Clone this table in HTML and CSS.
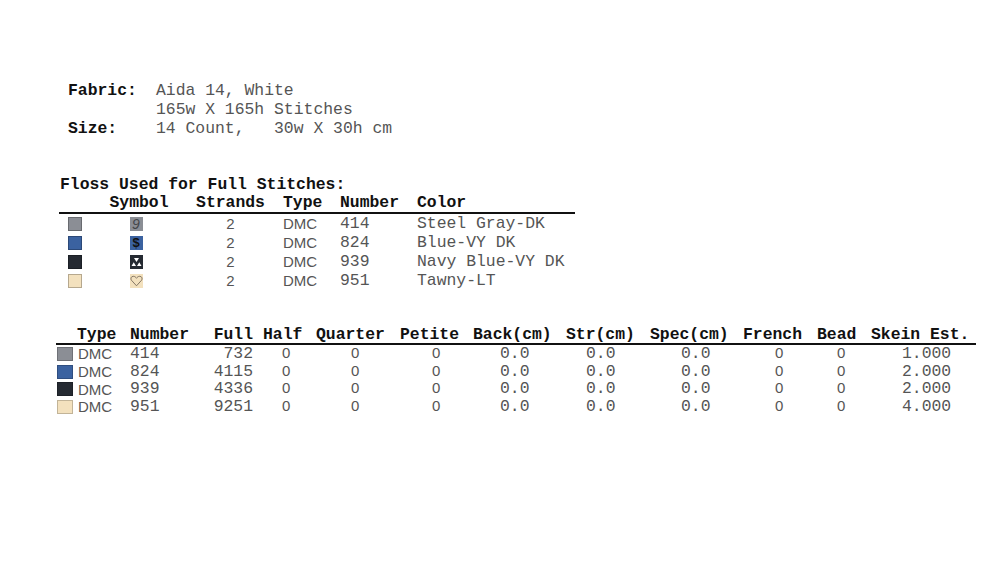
FILE: index.html
```html
<!DOCTYPE html>
<html>
<head>
<meta charset="utf-8">
<link rel="stylesheet" href="styles.css">
</head>
<body>
<div class="page">
  <div class="fabric">
    <div class="lbl">Fabric:</div><div class="val">Aida 14, White</div>
    <div class="lbl"></div><div class="val">165w X 165h Stitches</div>
    <div class="lbl">Size:</div><div class="val">14 Count,&nbsp;&nbsp; 30w X 30h cm</div>
  </div>

  <div class="floss-title">Floss Used for Full Stitches:</div>
  <div class="floss">
    <div class="fh"></div>
    <div class="fh c">Symbol</div>
    <div class="fh c">Strands</div>
    <div class="fh">Type</div>
    <div class="fh">Number</div>
    <div class="fh">Color</div>

    <div class="fd"><span class="sw gray"></span></div>
    <div class="fd c"><span class="sym gray"><span class="nine">9</span></span></div>
    <div class="fd c sans">2</div>
    <div class="fd sans">DMC</div>
    <div class="fd">414</div>
    <div class="fd">Steel Gray-DK</div>

    <div class="fd"><span class="sw blue"></span></div>
    <div class="fd c"><span class="sym blue"><span class="dollar">$</span></span></div>
    <div class="fd c sans">2</div>
    <div class="fd sans">DMC</div>
    <div class="fd">824</div>
    <div class="fd">Blue-VY DK</div>

    <div class="fd"><span class="sw navy"></span></div>
    <div class="fd c"><span class="sym navy"><svg width="13" height="14" viewBox="0 0 13 14"><path d="M4 3 L9 3 L6.5 7 Z M1.5 11 L6 11 L3.75 7.2 Z M7 11 L11.5 11 L9.25 7.2 Z" fill="#fff"/></svg></span></div>
    <div class="fd c sans">2</div>
    <div class="fd sans">DMC</div>
    <div class="fd">939</div>
    <div class="fd">Navy Blue-VY DK</div>

    <div class="fd"><span class="sw tawny"></span></div>
    <div class="fd c"><span class="sym tawny"><svg width="13" height="14" viewBox="0 0 13 14"><path d="M6.5 11.8 L1.4 6.2 C0.4 5 0.8 2.4 3.2 2.3 C4.8 2.2 5.9 3.3 6.5 4.3 C7.1 3.3 8.2 2.2 9.8 2.3 C12.2 2.4 12.6 5 11.6 6.2 Z" fill="none" stroke="#7a6d5c" stroke-width="0.9"/></svg></span></div>
    <div class="fd c sans">2</div>
    <div class="fd sans">DMC</div>
    <div class="fd">951</div>
    <div class="fd">Tawny-LT</div>
  </div>

  <div class="summary">
    <div class="sh type">Type</div>
    <div class="sh">Number</div>
    <div class="sh r">Full</div>
    <div class="sh">Half</div>
    <div class="sh">Quarter</div>
    <div class="sh">Petite</div>
    <div class="sh">Back(cm)</div>
    <div class="sh">Str(cm)</div>
    <div class="sh">Spec(cm)</div>
    <div class="sh">French</div>
    <div class="sh">Bead</div>
    <div class="sh">Skein Est.</div>

    <div class="sd first"><span class="sw2 gray"></span><span class="sans">DMC</span></div>
    <div class="sd">414</div>
    <div class="sd r">732</div>
    <div class="sd p-half"><span class="sans">0</span></div>
    <div class="sd p-quarter"><span class="sans">0</span></div>
    <div class="sd p-petite"><span class="sans">0</span></div>
    <div class="sd p-back">0.0</div>
    <div class="sd p-str">0.0</div>
    <div class="sd p-spec">0.0</div>
    <div class="sd p-french"><span class="sans">0</span></div>
    <div class="sd p-bead"><span class="sans">0</span></div>
    <div class="sd p-skein">1.000</div>

    <div class="sd first"><span class="sw2 blue"></span><span class="sans">DMC</span></div>
    <div class="sd">824</div>
    <div class="sd r">4115</div>
    <div class="sd p-half"><span class="sans">0</span></div>
    <div class="sd p-quarter"><span class="sans">0</span></div>
    <div class="sd p-petite"><span class="sans">0</span></div>
    <div class="sd p-back">0.0</div>
    <div class="sd p-str">0.0</div>
    <div class="sd p-spec">0.0</div>
    <div class="sd p-french"><span class="sans">0</span></div>
    <div class="sd p-bead"><span class="sans">0</span></div>
    <div class="sd p-skein">2.000</div>

    <div class="sd first"><span class="sw2 navy"></span><span class="sans">DMC</span></div>
    <div class="sd">939</div>
    <div class="sd r">4336</div>
    <div class="sd p-half"><span class="sans">0</span></div>
    <div class="sd p-quarter"><span class="sans">0</span></div>
    <div class="sd p-petite"><span class="sans">0</span></div>
    <div class="sd p-back">0.0</div>
    <div class="sd p-str">0.0</div>
    <div class="sd p-spec">0.0</div>
    <div class="sd p-french"><span class="sans">0</span></div>
    <div class="sd p-bead"><span class="sans">0</span></div>
    <div class="sd p-skein">2.000</div>

    <div class="sd first"><span class="sw2 tawny"></span><span class="sans">DMC</span></div>
    <div class="sd">951</div>
    <div class="sd r">9251</div>
    <div class="sd p-half"><span class="sans">0</span></div>
    <div class="sd p-quarter"><span class="sans">0</span></div>
    <div class="sd p-petite"><span class="sans">0</span></div>
    <div class="sd p-back">0.0</div>
    <div class="sd p-str">0.0</div>
    <div class="sd p-spec">0.0</div>
    <div class="sd p-french"><span class="sans">0</span></div>
    <div class="sd p-bead"><span class="sans">0</span></div>
    <div class="sd p-skein">4.000</div>
  </div>
</div>
</body>
</html>
```

FILE: styles.css
```css
html, body {
  margin: 0;
  padding: 0;
  background: #fff;
}
body {
  font-family: "Liberation Mono", "Courier New", monospace;
  font-size: 16.4px;
  color: #555;
}
.page {
  padding-top: 81px;
}
.fabric {
  display: grid;
  grid-template-columns: 88px auto;
  margin-left: 68px;
  line-height: 19px;
}
.fabric .lbl {
  font-weight: bold;
  color: #111;
}
.fabric .val {
  white-space: pre;
}
.floss-title {
  margin: 37px 0 0 60px;
  font-weight: bold;
  color: #111;
  line-height: 19px;
}
.floss {
  display: grid;
  grid-template-columns: 41px 78px 105px 57px 77px 158px;
  margin-left: 59px;
  width: 516px;
}
.fh {
  font-weight: bold;
  color: #111;
  line-height: 18px;
  height: 18px;
  border-bottom: 2px solid #111;
  padding-bottom: 0;
}
.fd {
  height: 19px;
  line-height: 19px;
  display: flex;
  align-items: center;
}
.fd.c, .fh.c {
  justify-content: center;
  text-align: center;
}
.sans {
  font-family: "Liberation Sans", Arial, sans-serif;
  font-size: 15px;
}
.sw {
  display: inline-block;
  width: 12px;
  height: 12px;
  margin-left: 9px;
  border: 1px solid rgba(0,0,0,0.25);
}
.gray { background: #8b8e95; }
.blue { background: #3b62a0; }
.navy { background: #252a32; }
.tawny { background: #f3e1be; }
.sym {
  width: 13px;
  height: 14px;
  display: inline-flex;
  align-items: center;
  justify-content: center;
  margin-left: -6px;
  overflow: hidden;
}
.sym svg { display: block; }
.nine {
  font-family: "Liberation Sans", Arial, sans-serif;
  font-style: italic;
  font-size: 14px;
  color: #45474b;
  line-height: 14px;
}
.dollar {
  font-family: "Liberation Sans", Arial, sans-serif;
  font-weight: bold;
  font-size: 13px;
  color: #111;
  line-height: 14px;
}

.summary {
  display: grid;
  grid-template-columns: 74px 70px 63px 53px 84px 73px 93px 84px 93px 74px 54px 105px;
  margin: 36px 0 0 56px;
  width: 920px;
}
.sh {
  font-weight: bold;
  color: #111;
  line-height: 17px;
  height: 17px;
  border-bottom: 2px solid #111;
  padding-bottom: 0;
}
.sh.type { padding-left: 21px; }
.sh.r { text-align: right; padding-right: 10px; }
.sd {
  height: 17.7px;
  line-height: 17.7px;
  white-space: nowrap;
}
.sd .sans { line-height: 1; }
.sd.r { text-align: right; padding-right: 10px; }
.sd.first {
  display: flex;
  align-items: center;
}
.sw2 {
  display: inline-block;
  width: 14px;
  height: 12px;
  margin: 0 5px 0 1px;
  border: 1px solid rgba(0,0,0,0.2);
}
.p-half { padding-left: 19px; }
.p-quarter { padding-left: 35px; }
.p-petite { padding-left: 32px; }
.p-back { padding-left: 27px; }
.p-str { padding-left: 20px; }
.p-spec { padding-left: 31px; }
.p-french { padding-left: 32px; }
.p-bead { padding-left: 20px; }
.p-skein { padding-left: 31px; }
```
